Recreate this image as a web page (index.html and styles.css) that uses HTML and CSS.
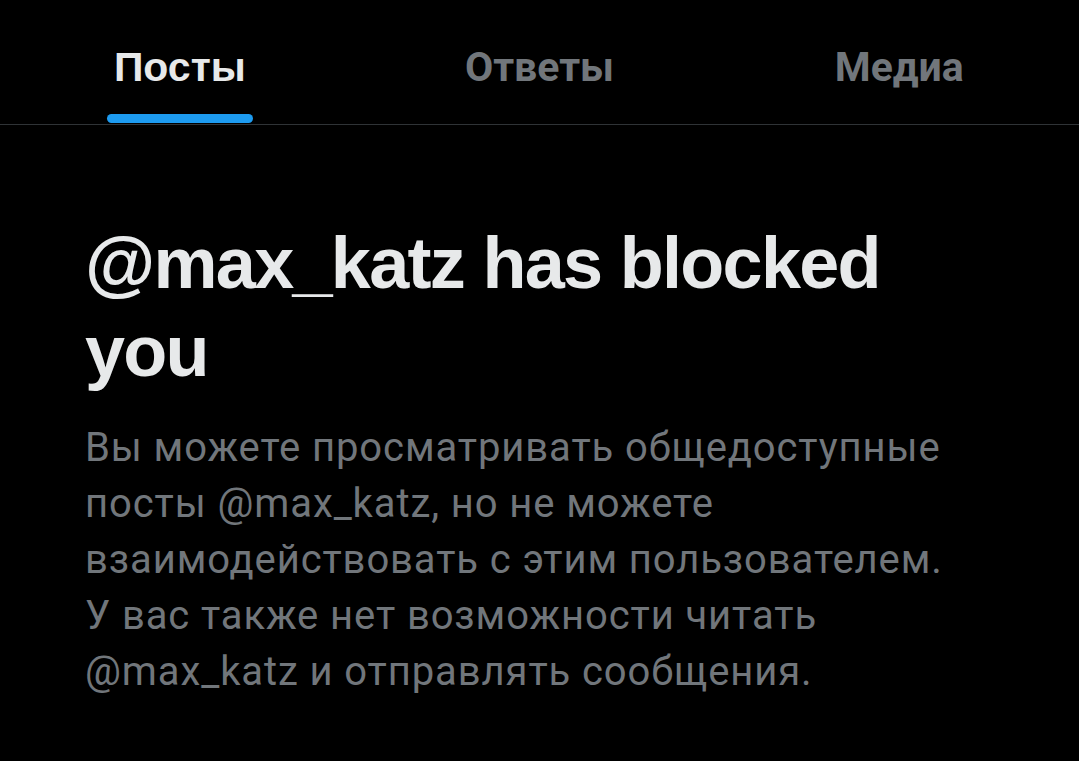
FILE: index.html
```html
<!DOCTYPE html>
<html lang="ru">
<head>
<meta charset="utf-8">
<title>Blocked</title>
<link rel="stylesheet" href="styles.css">
</head>
<body>
<div class="page">
  <nav class="tabs">
    <div class="tab active">
      <span class="label">Посты</span>
      <span class="indicator"></span>
    </div>
    <div class="tab">
      <span class="label">Ответы</span>
    </div>
    <div class="tab">
      <span class="label">Медиа</span>
    </div>
  </nav>
  <main class="content">
    <h1 class="title">@max_katz has blocked<br>you</h1>
    <p class="desc">Вы можете просматривать общедоступные<br>посты @max_katz, но не можете<br>взаимодействовать с этим пользователем.<br>У вас также нет возможности читать<br>@max_katz и отправлять сообщения.</p>
  </main>
</div>
</body>
</html>
```
FILE: styles.css
```css
html, body {
  margin: 0;
  padding: 0;
  background: #000;
}
.page {
  width: 1079px;
  height: 761px;
  background: #000;
  overflow: hidden;
}
.tabs {
  display: flex;
  height: 124px;
  border-bottom: 1px solid #2f3336;
  box-sizing: content-box;
}
.tab {
  flex: 1 1 0;
  display: flex;
  flex-direction: column;
  align-items: center;
  padding-top: 43px;
  box-sizing: border-box;
}
.label {
  font-family: Roboto, "Liberation Sans", sans-serif;
  font-weight: 700;
  font-size: 41px;
  line-height: 48px;
  color: #71767b;
}
.tab.active .label {
  font-family: "Liberation Sans", Arial, sans-serif;
  color: #e7e9ea;
}
.indicator {
  display: block;
  width: 146px;
  height: 9px;
  margin-top: 23px;
  border-radius: 5px;
  background: #1d9bf0;
}
.content {
  padding: 94px 40px 0 85px;
}
.title {
  margin: 0;
  font-family: "Liberation Sans", Arial, sans-serif;
  font-weight: 700;
  font-size: 72px;
  line-height: 88px;
  letter-spacing: -1.7px;
  color: #e7e9ea;
}
.desc {
  margin: 25px 0 0;
  font-family: Roboto, "Liberation Sans", sans-serif;
  font-weight: 400;
  font-size: 40px;
  line-height: 56px;
  letter-spacing: 0.9px;
  color: #71767b;
}
```
